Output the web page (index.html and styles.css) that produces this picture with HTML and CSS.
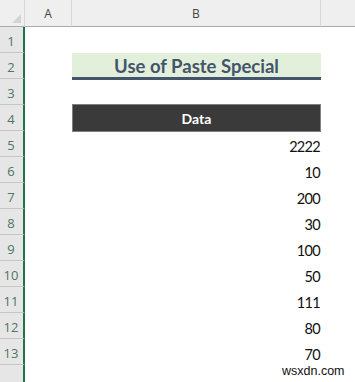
FILE: index.html
```html
<!DOCTYPE html>
<html>
<head>
<meta charset="utf-8">
<link rel="stylesheet" href="styles.css">
</head>
<body>
<div class="sheet">
  <div class="corner"><span class="tri"></span></div>
  <div class="colhead">A</div>
  <div class="colhead">B</div>
  <div class="colhead last"></div>

  <div class="rowhead">1</div><div class="cell"></div><div class="cell"></div><div class="cell"></div>
  <div class="rowhead">2</div><div class="cell"></div><div class="cell title">Use of Paste Special</div><div class="cell"></div>
  <div class="rowhead">3</div><div class="cell"></div><div class="cell"></div><div class="cell"></div>
  <div class="rowhead">4</div><div class="cell"></div><div class="cell dhead">Data</div><div class="cell"></div>
  <div class="rowhead">5</div><div class="cell"></div><div class="cell num">2222</div><div class="cell"></div>
  <div class="rowhead">6</div><div class="cell"></div><div class="cell num">10</div><div class="cell"></div>
  <div class="rowhead">7</div><div class="cell"></div><div class="cell num">200</div><div class="cell"></div>
  <div class="rowhead">8</div><div class="cell"></div><div class="cell num">30</div><div class="cell"></div>
  <div class="rowhead">9</div><div class="cell"></div><div class="cell num">100</div><div class="cell"></div>
  <div class="rowhead">10</div><div class="cell"></div><div class="cell num">50</div><div class="cell"></div>
  <div class="rowhead">11</div><div class="cell"></div><div class="cell num">111</div><div class="cell"></div>
  <div class="rowhead">12</div><div class="cell"></div><div class="cell num">80</div><div class="cell"></div>
  <div class="rowhead">13</div><div class="cell"></div><div class="cell num">70</div><div class="cell"></div>
  <div class="rowhead"></div><div class="cell"></div><div class="cell"></div><div class="cell"></div>
</div>
<div class="watermark">wsxdn.com</div>
</body>
</html>
```

FILE: styles.css
```css
html, body {
  margin: 0;
  padding: 0;
  background: #ffffff;
  overflow: hidden;
  height: 382px;
}
body {
  position: relative;
  font-family: Lato, "Open Sans", sans-serif;
}
.sheet {
  display: grid;
  grid-template-columns: 25px 47px 249px 1fr;
  grid-template-rows: 27px;
  grid-auto-rows: 26px;
}
.corner {
  background: #efefef;
  border-bottom: 1px solid #ababab;
  border-right: 1px solid #d8d8d8;
  position: relative;
}
.tri {
  position: absolute;
  right: 3px;
  bottom: 3px;
  width: 0;
  height: 0;
  border-left: 9px solid transparent;
  border-bottom: 9px solid #d4d4d4;
}
.colhead {
  background: #efefef;
  border-bottom: 1px solid #ababab;
  border-right: 1px solid #d8d8d8;
  box-sizing: border-box;
  display: flex;
  align-items: center;
  justify-content: center;
  font-family: "Open Sans", sans-serif;
  font-size: 12px;
  color: #444444;
  padding-top: 1px;
}
.colhead.last {
  border-right: none;
}
.rowhead {
  background: #e6e6e6;
  border-bottom: 1px solid #c6c6c6;
  border-right: 2px solid #217346;
  box-sizing: border-box;
  display: flex;
  align-items: flex-end;
  justify-content: center;
  padding-bottom: 2px;
  padding-right: 1px;
  font-family: "Open Sans", sans-serif;
  font-size: 13px;
  color: #4f7565;
}
.cell {
  box-sizing: border-box;
}
.title {
  background: #e2efda;
  border-bottom: 3px solid #44546a;
  margin-bottom: -1px;
  color: #44546a;
  font-weight: 700;
  font-size: 18.5px;
  display: flex;
  align-items: center;
  justify-content: center;
  padding-top: 1px;
}
.dhead {
  background: #3a3a3a;
  border: 1px solid #7f7f7f;
  margin-top: -1px;
  margin-bottom: -1px;
  color: #ffffff;
  font-weight: 700;
  font-size: 14px;
  display: flex;
  align-items: center;
  justify-content: center;
}
.num {
  display: flex;
  align-items: flex-end;
  justify-content: flex-end;
  padding-right: 1px;
  padding-bottom: 2px;
  font-size: 14.5px;
  letter-spacing: -0.7px;
  color: #111111;
}
.watermark {
  position: absolute;
  left: 282px;
  top: 364px;
  font-family: "Liberation Sans", Arial, sans-serif;
  font-size: 12.5px;
  color: #111111;
}
```
